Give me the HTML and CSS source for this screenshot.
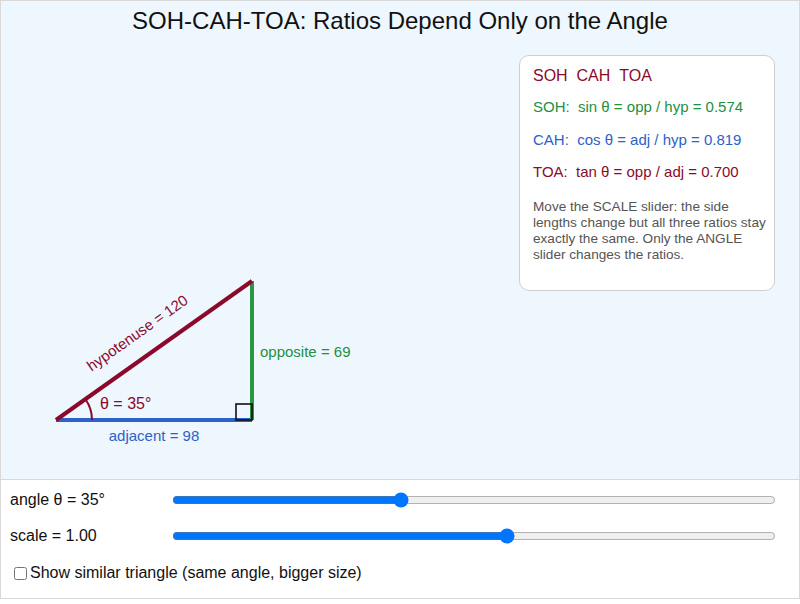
FILE: index.html
```html
<!DOCTYPE html>
<html lang="en">
<head>
    <meta charset="UTF-8">
    <meta name="viewport" content="width=device-width, initial-scale=1.0">
    <title>SOH-CAH-TOA</title>
    <link rel="stylesheet" href="styles.css">
</head>
<body>
    <div class="stage">
        <h1>SOH-CAH-TOA: Ratios Depend Only on the Angle</h1>
        <div class="scene">
            <svg class="triangle" width="510" height="420" viewBox="0 55 510 420">
                <!-- sides: adjacent, opposite, hypotenuse -->
                <line x1="55" y1="420" x2="251" y2="420" stroke="#2d62c8" stroke-width="4"/>
                <line x1="251" y1="420" x2="251" y2="281" stroke="#2b9643" stroke-width="4"/>
                <line x1="55" y1="420" x2="251" y2="281" stroke="#8b0a2b" stroke-width="4"/>
                <!-- right angle marker -->
                <rect x="235" y="404" width="16" height="16" fill="none" stroke="#111" stroke-width="1.6"/>
                <!-- angle arc -->
                <path d="M 91 420 A 36 36 0 0 0 84.5 399.3" fill="none" stroke="#8b0a2b" stroke-width="2"/>
                <text x="99" y="409" class="lbl theta" fill="#8b0a2b">θ = 35°</text>
                <text x="259" y="357" class="lbl" fill="#23903e">opposite = 69</text>
                <text x="153" y="441" class="lbl" fill="#2d62c8" text-anchor="middle">adjacent = 98</text>
                <text x="137" y="338" class="lbl" fill="#8b0a2b" text-anchor="middle" transform="rotate(-35.3 137 334)">hypotenuse = 120</text>
            </svg>
            <div class="card">
                <div class="card-title">SOH&nbsp;&nbsp;CAH&nbsp;&nbsp;TOA</div>
                <div class="ratio soh">SOH:&nbsp; sin θ = opp / hyp = 0.574</div>
                <div class="ratio cah">CAH:&nbsp; cos θ = adj / hyp = 0.819</div>
                <div class="ratio toa">TOA:&nbsp; tan θ = opp / adj = 0.700</div>
                <p class="note">Move the SCALE slider: the side<br>lengths change but all three ratios stay<br>exactly the same. Only the ANGLE<br>slider changes the ratios.</p>
            </div>
        </div>
    </div>
    <div class="controls">
        <div class="row">
            <label for="angle">angle θ = 35°</label>
            <input type="range" id="angle" min="5" max="85" value="35">
        </div>
        <div class="row">
            <label for="scale">scale = 1.00</label>
            <input type="range" id="scale" min="0.5" max="1.4" step="0.01" value="1">
        </div>
        <div class="check">
            <input type="checkbox" id="similar">
            <label for="similar">Show similar triangle (same angle, bigger size)</label>
        </div>
    </div>
</body>
</html>
```

FILE: styles.css
```css
body {
    margin: 0;
    font-family: "Liberation Sans", Arial, sans-serif;
    color: #111;
    background: #fff;
}
.stage {
    height: 478px;
    background: #eef6fe;
    border: 1px solid #d9d9d9;
}
h1 {
    margin: 6px 0 0;
    font-size: 24px;
    line-height: 28px;
    font-weight: normal;
    text-align: center;
}
.scene {
    display: flex;
    margin-top: 20px;
}
.triangle {
    display: block;
}
.lbl {
    font-size: 15px;
    font-family: "Liberation Sans", Arial, sans-serif;
}
.theta {
    font-size: 16px;
}
.card {
    margin-left: auto;
    margin-right: 24px;
    width: 228px;
    height: 214px;
    padding: 10px 13px;
    background: #fff;
    border: 1px solid #cfcfcf;
    border-radius: 10px;
}
.card-title {
    font-size: 16px;
    line-height: 20px;
    color: #8b0a2b;
}
.ratio {
    font-size: 15px;
    line-height: 20px;
    margin-top: 12.5px;
}
.soh { color: #23903e; margin-top: 11px; }
.cah { color: #2d62c8; }
.toa { color: #8b0a2b; }
.note {
    margin: 16.5px 0 0;
    font-size: 13.6px;
    line-height: 16px;
    color: #555;
    white-space: nowrap;
}
.controls {
    height: 116px;
    padding: 2px 23px 0 9px;
    border: 1px solid #d9d9d9;
    border-top: none;
}
.row {
    display: flex;
    align-items: center;
    height: 36px;
}
.row label {
    width: 162px;
    font-size: 16px;
}
.row input {
    flex: 1;
    margin: 0;
}
.check {
    display: flex;
    align-items: center;
    height: 38px;
    font-size: 16px;
}
.check input {
    margin: 0 3px 0 4px;
}
```
